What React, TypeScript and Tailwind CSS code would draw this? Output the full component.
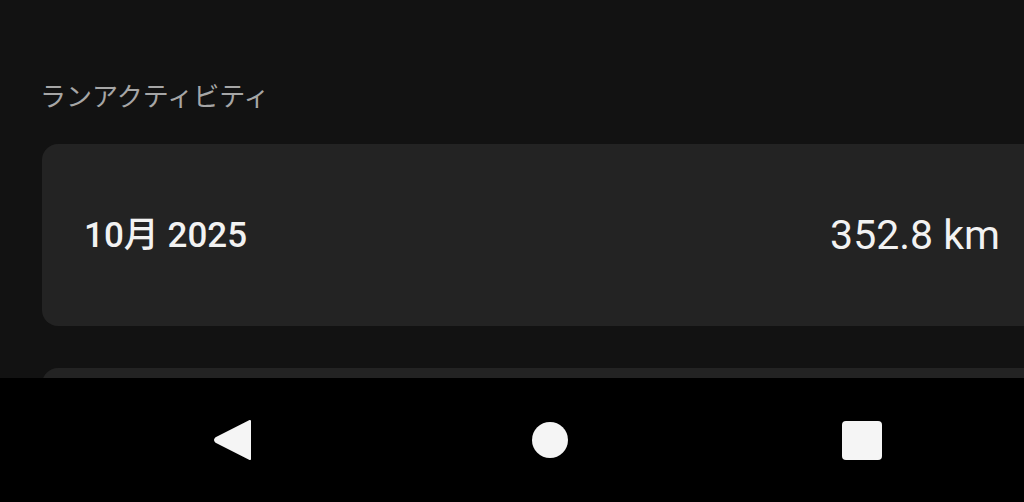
const cjk = { fontFamily: 'Roboto, "Noto Sans CJK JP", sans-serif' };

const NavBar = () => {
  return (
    <div className="flex h-[124px] items-center bg-black pl-[213px]">
      <svg width="40" height="42" viewBox="0 0 40 42" className="shrink-0">
        <path d="M37 2 L3 19.2 Q1 21 3 22.8 L37 40 Z" fill="#f5f5f5" stroke="#f5f5f5" strokeWidth="2" strokeLinejoin="round" />
      </svg>
      <div className="ml-[279px] h-[36px] w-[36px] shrink-0 rounded-full bg-[#f5f5f5]" />
      <div className="ml-[274px] h-[39px] w-[40px] shrink-0 rounded-[4px] bg-[#f5f5f5]" />
    </div>
  );
};

const MonthCard = ({ month, distance }: { month?: string; distance?: string }) => {
  return (
    <div className="flex h-[182px] items-center justify-between rounded-[16px] bg-[#232323] px-[42px]">
      <span className="text-[35px] font-medium leading-none text-[#f2f2f2]">{month}</span>
      <span className="text-[41px] leading-none text-[#f2f2f2]">{distance}</span>
    </div>
  );
};

export default function App() {
  return (
    <div className="flex h-[502px] w-[1024px] flex-col overflow-hidden bg-[#121212]" style={cjk}>
      <div className="flex-1 overflow-hidden">
        <div className="w-[1084px] px-[42px] pt-[84px]">
          <div className="-ml-[2px] text-[26px] leading-none text-[#a6a6a6]">ランアクティビティ</div>
          <div className="mt-[34px] flex flex-col gap-[42px]">
            <MonthCard month="10月 2025" distance="352.8 km" />
            <MonthCard />
          </div>
        </div>
      </div>
      <NavBar />
    </div>
  );
}
